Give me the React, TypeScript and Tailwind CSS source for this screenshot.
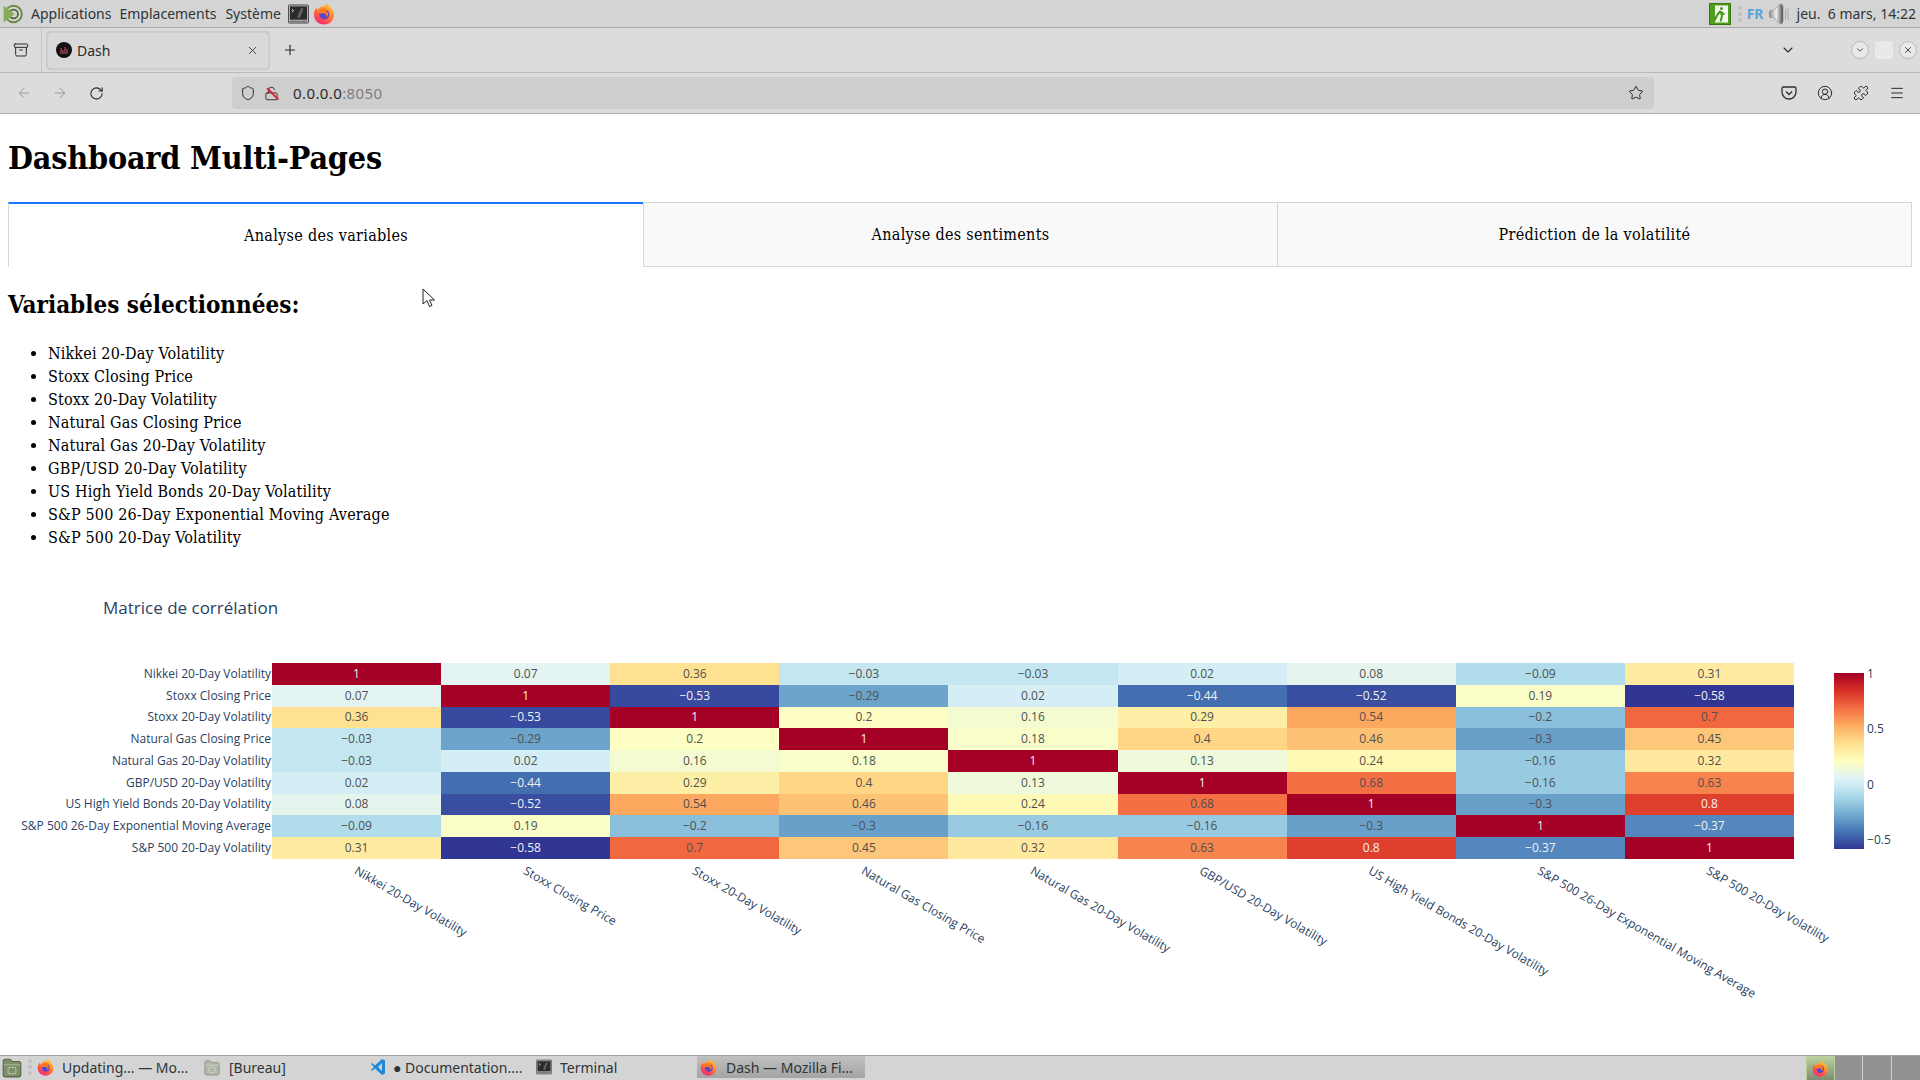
import { Archive, ArrowLeft, ArrowRight, ChevronDown, Menu, Plus, Puzzle, RotateCw, Shield, Star, X, CircleUserRound, LockOpen } from 'lucide-react'

const variables = [
  'Nikkei 20-Day Volatility',
  'Stoxx Closing Price',
  'Stoxx 20-Day Volatility',
  'Natural Gas Closing Price',
  'Natural Gas 20-Day Volatility',
  'GBP/USD 20-Day Volatility',
  'US High Yield Bonds 20-Day Volatility',
  'S&P 500 26-Day Exponential Moving Average',
  'S&P 500 20-Day Volatility',
]

const matrix = [
  [1, 0.07, 0.36, -0.03, -0.03, 0.02, 0.08, -0.09, 0.31],
  [0.07, 1, -0.53, -0.29, 0.02, -0.44, -0.52, 0.19, -0.58],
  [0.36, -0.53, 1, 0.2, 0.16, 0.29, 0.54, -0.2, 0.7],
  [-0.03, -0.29, 0.2, 1, 0.18, 0.4, 0.46, -0.3, 0.45],
  [-0.03, 0.02, 0.16, 0.18, 1, 0.13, 0.24, -0.16, 0.32],
  [0.02, -0.44, 0.29, 0.4, 0.13, 1, 0.68, -0.16, 0.63],
  [0.08, -0.52, 0.54, 0.46, 0.24, 0.68, 1, -0.3, 0.8],
  [-0.09, 0.19, -0.2, -0.3, -0.16, -0.16, -0.3, 1, -0.37],
  [0.31, -0.58, 0.7, 0.45, 0.32, 0.63, 0.8, -0.37, 1],
]

const scale = [
  [49, 54, 149],
  [69, 117, 180],
  [116, 173, 209],
  [171, 217, 233],
  [224, 243, 248],
  [255, 255, 191],
  [254, 224, 144],
  [253, 174, 97],
  [244, 109, 67],
  [215, 48, 39],
  [165, 0, 38],
]

const cellColor = (v: number) => {
  const t = ((v + 0.58) / 1.58) * 10
  const i = Math.min(9, Math.floor(t))
  const f = t - i
  const c = scale[i].map((a, k) => Math.round(a + (scale[i + 1][k] - a) * f))
  return `rgb(${c[0]},${c[1]},${c[2]})`
}

const colorbar = `linear-gradient(to top, ${scale.map((c) => `rgb(${c[0]},${c[1]},${c[2]})`).join(', ')})`

const fmt = (v: number) => (v < 0 ? `\u2212${Math.abs(v)}` : `${v}`)

const Firefox = ({ size = 20 }: { size?: number }) => (
  <svg width={size} height={size} viewBox="0 0 24 24" className="shrink-0">
    <defs>
      <linearGradient id="ffx" x1="0.8" y1="0" x2="0.25" y2="1">
        <stop offset="0" stopColor="#ffd53a" />
        <stop offset="0.35" stopColor="#ff9a2e" />
        <stop offset="0.75" stopColor="#ff4a4a" />
        <stop offset="1" stopColor="#f0268a" />
      </linearGradient>
    </defs>
    <path d="M15.500 0.500c-.2 2.500 1.500 3.500 3 5.500 1.800 2.300 3.500 4 3.500 7 0 6-4.500 10.500-10.500 10.500S1 19 1 13c0-2.500.8-5 2.500-7 .3 1 .8 1.800 1.500 2.300C6 6 8 4.800 10.500 4.500c2-.5 4-2 5-4z" fill="url(#ffx)" />
    <circle cx="11.800" cy="13" r="5.200" fill="#5b46c9" />
    <path d="M5.500 10.500C7 7.500 10 6.500 12.500 6.800c2 .2 4 1.500 5 3-1.500-.8-3.300-.8-4.200-.2 1.500.3 2.700 1.700 2.500 3.300-.2 1.500-1.300 2.600-2.800 2.900 1-1 1.200-2.400.2-3.300-1-.8-3-1-4.500-.5-1 .2-2 0-3.200-1.500z" fill="#ff7a1f" />
  </svg>
)

const TerminalIcon = ({ className }: { className: string }) => (
  <svg viewBox="0 0 22 20" className={className}>
    <rect x="0.500" y="0.500" width="21" height="19" rx="1" fill="#b8b8b8" stroke="#4a4a4a" />
    <rect x="2" y="2" width="18" height="14" fill="#2b2b2b" />
    <path d="M4 5l2 1.500L4 8" stroke="#ddd" fill="none" />
    <path d="M11 14l4-10" stroke="#5e5e5e" strokeWidth="3" />
    <rect x="2" y="17" width="18" height="1.500" fill="#777" />
  </svg>
)

const FolderIcon = ({ className, dark }: { className: string; dark?: boolean }) => (
  <svg viewBox="0 0 18 20" className={className}>
    <path
      d="M1 5a2 2 0 0 1 2-2h4l2 2h6a2 2 0 0 1 2 2v10a2 2 0 0 1-2 2H3a2 2 0 0 1-2-2z"
      fill={dark ? '#7c9068' : '#b0b6a8'}
      stroke={dark ? '#55664a' : '#8a9285'}
    />
    <path d="M1.500 8h15" stroke={dark ? '#a2b392' : '#cfd4ca'} />
    <rect x="5.500" y="10.500" width="7" height="5.500" rx="1" fill="none" stroke={dark ? '#d2dcc8' : '#e4e8e0'} strokeDasharray="1.500 1" />
  </svg>
)

const MateLogo = () => (
  <svg width="20" height="22" viewBox="0 0 18 20" className="shrink-0 -mx-[1px]">
    <circle cx="9.500" cy="10" r="7.500" fill="none" stroke="#6d8a45" strokeWidth="1.800" />
    <circle cx="9.500" cy="10" r="4" fill="none" stroke="#4d6630" strokeWidth="1.500" />
    <path d="M0.500 2.500l10 7.500-10 7.500z" fill="#86ad55" />
  </svg>
)

const ExitIcon = () => (
  <svg width="22" height="22" viewBox="0 0 22 22" className="shrink-0">
    <rect x="0.500" y="0.500" width="21" height="21" fill="#4f9e1c" stroke="#357a10" />
    <rect x="6" y="2.500" width="13" height="17" fill="#f3f7ee" />
    <circle cx="12.500" cy="5.500" r="1.500" fill="#3f9a16" />
    <path d="M11.500 8l-3 3.500-3 6M11.500 8l1.500 5-1.500 5.500M12 9l3.500 2.500" stroke="#3f9a16" strokeWidth="2" fill="none" />
  </svg>
)

const Speaker = () => (
  <svg width="21" height="22" viewBox="0 0 20 22" className="shrink-0">
    <defs>
      <linearGradient id="spk" x1="0" y1="0" x2="1" y2="0">
        <stop offset="0" stopColor="#8e8e8e" />
        <stop offset="0.5" stopColor="#f0f0f0" />
        <stop offset="1" stopColor="#4e4e4e" />
      </linearGradient>
    </defs>
    <path d="M1 8.500q0-1 1-1h3l7-6.500q2-.5 2.500 3v14q-.5 3.500-2.500 3l-7-6.500H2q-1 0-1-1z" fill="url(#spk)" stroke="#777" strokeWidth="0.500" />
    <path d="M17 6v10M19.500 5v12" stroke="#a8a8a8" />
  </svg>
)

const DashFavicon = () => (
  <svg width="16" height="16" viewBox="0 0 16 16" className="shrink-0">
    <circle cx="8" cy="8" r="8" fill="#111" />
    <path d="M5 6v6M7 8v4M9 5v7M11 7v5" stroke="#b24a5a" strokeWidth="1.200" />
  </svg>
)

const PocketIcon = () => (
  <svg width="16" height="16" viewBox="0 0 16 16" fill="none" stroke="#303030" strokeWidth="1.300" className="shrink-0">
    <path d="M2.500 2h11A1.500 1.500 0 0 1 15 3.500V7a7 7 0 0 1-14 0V3.500A1.500 1.500 0 0 1 2.500 2z" />
    <path d="M5 6.500l3 3 3-3" />
  </svg>
)

const TaskItem = ({ icon, label, className }: { icon: React.ReactNode; label: string; className: string }) => (
  <div className={`flex items-center h-full ${className}`}>
    {icon}
    <span className="whitespace-nowrap">{label}</span>
  </div>
)

const App = () => {
  return (
    <div className="w-[1920px] h-[1080px] flex flex-col overflow-hidden bg-white font-['Noto_Sans',sans-serif]">
      {/* panneau du haut */}
      <div className="h-[28px] shrink-0 flex items-center justify-between bg-[#d4d4d4] border-b border-b-[#a8a8a8] text-[14px] text-[#2e3436]">
        <div className="flex items-center pl-[4px]">
          <MateLogo />
          <span className="ml-[9px]">Applications</span>
          <span className="ml-[8px]">Emplacements</span>
          <span className="ml-[9px]">Système</span>
          <TerminalIcon className="w-[21px] h-[20px] ml-[7px]" />
          <span className="ml-[4px]">
            <Firefox size={23} />
          </span>
        </div>
        <div className="flex items-center pr-[4px]">
          <ExitIcon />
          <div className="w-[4px] h-[16px] ml-[7px] border-l-4 border-dotted border-l-[#c0c0c0]"></div>
          <span className="ml-[5px] font-bold text-[#5ba3dc]">FR</span>
          <span className="ml-[4px]">
            <Speaker />
          </span>
          <span className="ml-[8px]">jeu.&nbsp; 6 mars, 14:22</span>
        </div>
      </div>

      {/* onglets firefox */}
      <div className="h-[45px] shrink-0 flex items-center bg-[#dcdcdc] border-b border-b-[#b8b8b8] text-[#2b2b2b]">
        <div className="w-[42px] h-full flex items-center justify-center border-r border-r-[#c4c4c4]">
          <Archive size={16} strokeWidth={1.500} />
        </div>
        <div className="ml-[5px] w-[222px] h-[37px] flex items-center px-[8px] bg-[#d9d9d9] rounded-[4px] border border-[#cfcfcf] shadow-[0_0_2px_rgba(0,0,0,0.3)] text-[14px]">
          <DashFavicon />
          <span className="ml-[5px]">Dash</span>
          <X size={13} strokeWidth={1.500} className="ml-auto mr-[1px]" />
        </div>
        <Plus size={16} strokeWidth={1.700} className="ml-[13px]" />
        <ChevronDown size={16} strokeWidth={1.700} className="ml-auto mr-[55px]" />
        <div className="w-[18px] h-[18px] rounded-full bg-[#e8e8e8] border border-[#bbbbbb] flex items-center justify-center">
          <ChevronDown size={10} strokeWidth={2} />
        </div>
        <div className="w-[18px] h-[18px] ml-[6px] rounded-[3px] bg-[#e9e9e9]"></div>
        <div className="w-[18px] h-[18px] ml-[6px] mr-[3px] rounded-full bg-[#e8e8e8] border border-[#bbbbbb] flex items-center justify-center">
          <X size={10} strokeWidth={2} />
        </div>
      </div>

      {/* barre d'adresse */}
      <div className="h-[41px] shrink-0 flex items-center bg-[#dcdcdc] border-b border-b-[#b0b0b0] text-[#2b2b2b]">
        <ArrowLeft size={16} strokeWidth={1.500} className="ml-[16px] text-[#9a9a9a]" />
        <ArrowRight size={16} strokeWidth={1.500} className="ml-[20px] text-[#9a9a9a]" />
        <RotateCw size={15} strokeWidth={1.700} className="ml-[21px]" />
        <div className="ml-[128px] w-[1422px] h-[32px] flex items-center bg-[#cecece] rounded-[4px] pl-[8px] pr-[10px] text-[15px]">
          <Shield size={16} strokeWidth={1.500} />
          <div className="relative ml-[8px]">
            <LockOpen size={15} strokeWidth={1.500} />
            <div className="absolute left-[1px] top-[7px] w-[16px] h-[1.500px] bg-[#e0223f] rotate-45"></div>
          </div>
          <span className="ml-[14px] tracking-[0.4px]">
            0.0.0.0<span className="text-[#7d7d7d]">:8050</span>
          </span>
          <Star size={16} strokeWidth={1.500} className="ml-auto" />
        </div>
        <div className="ml-[127px]">
          <PocketIcon />
        </div>
        <CircleUserRound size={16} strokeWidth={1.500} className="ml-[20px]" />
        <Puzzle size={16} strokeWidth={1.500} className="ml-[20px]" />
        <Menu size={16} strokeWidth={1.500} className="ml-[20px]" />
      </div>

      {/* contenu de la page */}
      <div className="relative flex-1 px-[8px] font-['DejaVu_Serif_Condensed','DejaVu_Serif',serif] text-black">
        <h1 className="text-[32px] leading-[37px] font-bold mt-[26px] tracking-[-0.2px]">Dashboard Multi-Pages</h1>
        <div className="flex h-[65px] mt-[25px] text-[16px] tracking-[0.3px]">
          <div className="w-[635px] flex items-center justify-center bg-white border-l border-l-[#d6d6d6] border-t-2 border-t-[#1975fa]">
            Analyse des variables
          </div>
          <div className="w-[635px] flex items-center justify-center bg-[#f9f9f9] border border-[#d6d6d6]">
            Analyse des sentiments
          </div>
          <div className="flex-1 flex items-center justify-center bg-[#f9f9f9] border border-l-0 border-[#d6d6d6]">
            Prédiction de la volatilité
          </div>
        </div>
        <h2 className="text-[24px] leading-[28px] font-bold mt-[24px]">Variables sélectionnées:</h2>
        <ul className="list-disc pl-[40px] mt-[23px] text-[16px] leading-[23px] tracking-[0.15px]">
          {variables.map((v) => (
            <li key={v}>{v}</li>
          ))}
        </ul>

        {/* curseur */}
        <svg width="14" height="20" viewBox="0 0 14 20" className="absolute left-[422px] top-[174px]">
          <path d="M1 1v15l4-3.500 2.500 6 2.500-1-2.500-5.500h5z" fill="#fff" stroke="#222" />
        </svg>

        {/* matrice de correlation */}
        <div className="font-['Open_Sans',sans-serif] text-[#2a3f5f]">
          <div className="ml-[95px] mt-[47px] text-[17px] leading-[23px]">Matrice de corrélation</div>
          <div className="flex mt-[44px]">
            <div className="w-[264px] shrink-0 pr-[1px] text-[12px] text-right">
              {variables.map((v) => (
                <div key={v} className="h-[21.780px] flex items-center justify-end whitespace-nowrap">
                  {v}
                </div>
              ))}
            </div>
            <div className="w-[1522px] shrink-0">
              {matrix.map((row, r) => (
                <div key={r} className="flex h-[21.780px]">
                  {row.map((v, c) => (
                    <div
                      key={c}
                      className={`flex-1 flex items-center justify-center text-[12px] ${
                        v > 0.75 || v < -0.35 ? 'text-[#f2f2f2]' : 'text-[#505050]'
                      }`}
                      style={{ backgroundColor: cellColor(v) }}
                    >
                      {fmt(v)}
                    </div>
                  ))}
                </div>
              ))}
              <div className="flex">
                {variables.map((v) => (
                  <div key={v} className="relative flex-1 h-[10px]">
                    <span className="absolute left-[calc(50%+3px)] top-[3px] origin-top-left rotate-[30deg] text-[12px] whitespace-nowrap">
                      {v}
                    </span>
                  </div>
                ))}
              </div>
            </div>
            <div className="ml-[40px] mt-[10px] flex">
              <div className="w-[30px] h-[176px]" style={{ background: colorbar }}></div>
              <div className="relative text-[12px] ml-[3px]">
                <span className="absolute left-0 top-[-8px]">1</span>
                <span className="absolute left-0 top-[47px]">0.5</span>
                <span className="absolute left-0 top-[103px]">0</span>
                <span className="absolute left-0 top-[158px] whitespace-nowrap">{'\u2212'}0.5</span>
              </div>
            </div>
          </div>
        </div>
      </div>

      {/* barre des taches */}
      <div className="relative h-[25px] shrink-0 flex items-center bg-[#d4d4d4] border-t border-t-[#a0a0a0] text-[14px] text-[#2e3436] pb-[2px]">
        <FolderIcon dark className="w-[20px] h-[22px] ml-[2px]" />
        <div className="w-[4px] h-[16px] ml-[6px] border-l-4 border-dotted border-l-[#c0c0c0]"></div>
        <TaskItem className="ml-[5px] w-[167px] gap-[7px]" icon={<Firefox size={18} />} label="Updating... — Mo..." />
        <TaskItem className="w-[166px] gap-[9px]" icon={<FolderIcon className="w-[16px] h-[18px]" />} label="[Bureau]" />
        <TaskItem className="w-[166px] gap-[7px]" icon={<svg width="16" height="18" viewBox="0 0 16 18" className="shrink-0"><path d="M12 1l3 1.500v13L12 17 5 10.500 2 13l-1-1 3-3-3-3 1-1 3 2.500zM12 5L8 9l4 4z" fill="#1f88d8" /></svg>} label="● Documentation...." />
        <TaskItem className="w-[162px] gap-[8px]" icon={<TerminalIcon className="w-[16px] h-[16px]" />} label="Terminal" />
        <TaskItem className="w-[168px] gap-[8px] pl-[3px] -translate-x-[1px] bg-gradient-to-b from-[#c0c0c0] to-[#a4a4a4]" icon={<Firefox size={18} />} label="Dash — Mozilla Fi..." />
        <div className="ml-auto flex h-[25px] -mb-[2px]">
          <div className="w-[29px] h-full flex items-center justify-center bg-gradient-to-b from-[#bcd3a0] to-[#7c8a70] border-x border-[#b8cf9c]">
            <Firefox size={17} />
          </div>
          <div className="w-[28px] h-full bg-[#919191] border-r border-r-[#cfcfcf]"></div>
          <div className="w-[29px] h-full bg-[#919191] border-r border-r-[#cfcfcf]"></div>
          <div className="w-[28px] h-full bg-[#919191]"></div>
        </div>
      </div>
    </div>
  )
}

export default App
